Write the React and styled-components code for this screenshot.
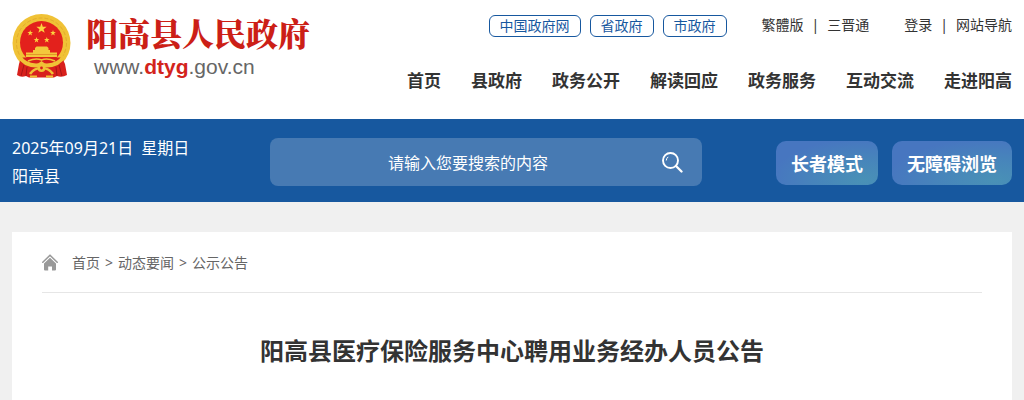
import React from 'react';
import styled, { createGlobalStyle } from 'styled-components';

const GlobalStyle = createGlobalStyle`
  * {
    box-sizing: border-box;
  }
  body {
    margin: 0;
    background: #f0f0f0;
    color: #333;
    font-family: "Noto Sans", "Noto Sans CJK SC", sans-serif;
    font-size: 14px;
  }
  a {
    color: inherit;
    text-decoration: none;
  }
  button, input {
    font-family: inherit;
  }
`;

const govLinks = ['中国政府网', '省政府', '市政府'];
const userLinks = [
  ['繁體版', '三晋通'],
  ['登录', '网站导航'],
];
const navItems = ['首页', '县政府', '政务公开', '解读回应', '政务服务', '互动交流', '走进阳高'];
const crumbs = ['首页', '动态要闻', '公示公告'];

const STAR = 'M0 -1 L0.24 -0.32 L0.95 -0.31 L0.38 0.12 L0.59 0.81 L0 0.4 L-0.59 0.81 L-0.38 0.12 L-0.95 -0.31 L-0.24 -0.32 Z';

const Emblem = () => (
  <svg width="60" height="64" viewBox="0 0 60 64" aria-hidden="true">
    <circle cx="29.5" cy="29" r="29" fill="#f0c236" />
    <circle cx="29.5" cy="29" r="25" fill="none" stroke="#e3ac2c" strokeWidth="1" strokeDasharray="4 2" />
    <circle cx="29.5" cy="28.5" r="21.5" fill="#e3211c" />
    <g fill="#fbd33f">
      <path d={STAR} transform="translate(29.5 14.5) scale(5.4)" />
      <path d={STAR} transform="translate(18.2 19) scale(3)" />
      <path d={STAR} transform="translate(41 19) scale(3)" />
      <path d={STAR} transform="translate(24.5 26) scale(3)" />
      <path d={STAR} transform="translate(34.8 26) scale(3)" />
    </g>
    <path d="M23 34 L24.5 32.5 H35 L36.5 34 V36 H38 V38.5 H45 V43 H14 V38.5 H21 V36 H23 Z" fill="#f3c83c" />
    <path d="M14 40.5 H45" stroke="#e08a24" strokeWidth="0.8" />
    <path d="M9 43.5 H50 L53 50 L55 61 Q50 64 45 62 L42 63.5 H17 L14 62 Q9 64 5 61 L7 50 Z" fill="#d8201c" />
    <path d="M7 42 Q12 51 24 51.5 Q27 51.5 29.5 49.5 Q32 51.5 35 51.5 Q47 51 52 42" fill="none" stroke="#f0c236" strokeWidth="4" />
    <path d="M16 47 Q24 43.5 29.5 46 Q35 43.5 43 47" fill="none" stroke="#f0c236" strokeWidth="1.6" />
    <path d="M18 60 Q22 54 29.5 54 Q37 54 41 60" fill="none" stroke="#f0c236" strokeWidth="2.6" />
    <circle cx="29.5" cy="54" r="4" fill="#f0c236" />
    <circle cx="29.5" cy="54" r="1.4" fill="#d8201c" />
    <path d="M18 62.5 H25 M34 62.5 H41" stroke="#f0c236" strokeWidth="2" />
    <path d="M12 51 L9 62 M15 53 L14 62 M47 51 L50 62 M44 53 L45 62" stroke="#a01416" strokeWidth="0.9" />
  </svg>
);

const SearchIcon = () => (
  <svg width="22" height="22" viewBox="0 0 22 22" fill="none" stroke="#fff" strokeLinecap="round" aria-hidden="true">
    <circle cx="9.5" cy="9.5" r="7.5" strokeWidth="1.9" />
    <path d="M15 15 L20.5 20.5" strokeWidth="2.3" />
    <path d="M5.3 9.1 Q5.5 7.1 6.9 6.1" strokeWidth="1" />
  </svg>
);

const HomeIcon = () => (
  <svg width="16" height="17" viewBox="0 0 16 17" aria-hidden="true">
    <path d="M0.8 8.2 L8 1.2 L15.2 8.2" fill="none" stroke="#999" strokeWidth="1.6" strokeLinecap="round" strokeLinejoin="round" />
    <path d="M8 3.8 L14 9.6 V15.5 Q14 16.4 13 16.4 H10 V12.6 H6.2 V16.4 H3 Q2 16.4 2 15.5 V9.6 Z" fill="#999" />
  </svg>
);

const App = () => {
  return (
    <Page>
      <GlobalStyle />
      <Header>
        <HeaderInner>
          <Logo href="#">
            <Emblem />
            <LogoText>
              <SiteName>阳高县人民政府</SiteName>
              <SiteUrl>www.<b>dtyg</b>.gov.cn</SiteUrl>
            </LogoText>
          </Logo>
          <HeaderRight>
            <TopLinks>
              <PillGroup>
                {govLinks.map((name) => <Pill href="#" key={name}>{name}</Pill>)}
              </PillGroup>
              {userLinks.map(([first, second]) => (
                <LinkPair key={first}>
                  <a href="#">{first}</a>
                  <span>|</span>
                  <a href="#">{second}</a>
                </LinkPair>
              ))}
            </TopLinks>
            <Nav>
              {navItems.map((item) => <a href="#" key={item}>{item}</a>)}
            </Nav>
          </HeaderRight>
        </HeaderInner>
      </Header>
      <BlueBar>
        <BarInner>
          <DateInfo>
            <DateLine>
              <span>2025年09月21日</span>
              <span>星期日</span>
            </DateLine>
            <div>阳高县</div>
          </DateInfo>
          <SearchForm onSubmit={(e) => e.preventDefault()}>
            <SearchInput type="text" placeholder="请输入您要搜索的内容" aria-label="请输入您要搜索的内容" />
            <SearchButton type="submit"><SearchIcon /></SearchButton>
          </SearchForm>
          <ModeButtons>
            <ModeButton type="button">长者模式</ModeButton>
            <ModeButton type="button">无障碍浏览</ModeButton>
          </ModeButtons>
        </BarInner>
      </BlueBar>
      <Main>
        <Article>
          <Breadcrumb>
            <HomeIcon />
            <CrumbList>
              {crumbs.map((crumb, index) => (
                <React.Fragment key={crumb}>
                  {index > 0 && <span>&gt;</span>}
                  <a href="#">{crumb}</a>
                </React.Fragment>
              ))}
            </CrumbList>
          </Breadcrumb>
          <Title>阳高县医疗保险服务中心聘用业务经办人员公告</Title>
        </Article>
      </Main>
    </Page>
  );
};

const Page = styled.div`
  display: flex;
  flex-direction: column;
  min-height: 100vh;
`;

const Container = styled.div`
  width: 100%;
  max-width: 1224px;
  margin: 0 auto;
  padding: 0 12px;
`;

const Header = styled.header`
  background: #fff;
`;

const HeaderInner = styled(Container)`
  display: flex;
  justify-content: space-between;
  align-items: flex-start;
  padding-top: 14px;
  padding-bottom: 26px;
`;

const Logo = styled.a`
  display: flex;
  gap: 14px;
`;

const LogoText = styled.div`
  display: flex;
  flex-direction: column;
`;

const SiteName = styled.strong`
  font-family: "Noto Serif CJK SC", "Noto Sans CJK SC", serif;
  font-size: 32px;
  font-weight: 900;
  line-height: 36px;
  color: #cc1f17;
`;

const SiteUrl = styled.span`
  padding-left: 8px;
  font-family: "Liberation Sans", sans-serif;
  font-size: 21px;
  line-height: 34px;
  color: #666;

  b {
    color: #d3241c;
  }
`;

const HeaderRight = styled.div`
  display: flex;
  flex-direction: column;
  align-items: flex-end;
  gap: 31px;
`;

const TopLinks = styled.div`
  display: flex;
  align-items: center;
  gap: 35px;
  height: 24px;
`;

const PillGroup = styled.div`
  display: flex;
  gap: 9px;
`;

const Pill = styled.a`
  padding: 0 10px 1px;
  border: 1px solid #17589f;
  border-radius: 6px;
  line-height: 19px;
  color: #17589f;
`;

const LinkPair = styled.div`
  display: flex;
  gap: 8px;
  padding-bottom: 2px;
  line-height: 22px;
`;

const Nav = styled.nav`
  display: flex;
  gap: 30px;
  font-size: 17px;
  font-weight: bold;
  line-height: 24px;
`;

const BlueBar = styled.div`
  background: #17589f;
  color: #fff;
`;

const BarInner = styled(Container)`
  display: grid;
  grid-template-columns: 258px minmax(0, 432px) 1fr;
  align-items: center;
  padding-top: 15px;
  padding-bottom: 12px;
`;

const DateInfo = styled.div`
  font-size: 16px;
  line-height: 28px;
`;

const DateLine = styled.div`
  display: flex;
  gap: 8px;
`;

const SearchForm = styled.form`
  display: flex;
  height: 48px;
  border-radius: 8px;
  background: #477ab3;
`;

const SearchInput = styled.input`
  flex: 1;
  min-width: 0;
  padding: 2px 0 0 24px;
  border: none;
  outline: none;
  background: none;
  color: #fff;
  font-size: 16px;
  text-align: center;

  &::placeholder {
    color: #fff;
    opacity: 1;
  }
`;

const SearchButton = styled.button`
  display: flex;
  align-items: center;
  justify-content: center;
  width: 60px;
  padding: 0;
  border: none;
  background: none;
  cursor: pointer;
`;

const ModeButtons = styled.div`
  display: flex;
  justify-content: flex-end;
  gap: 14px;
  padding-top: 2px;
`;

const ModeButton = styled.button`
  height: 44px;
  padding: 0 15px;
  border: none;
  border-radius: 10px;
  background: radial-gradient(ellipse at 85% 90%, #4991b6 0%, #4784bb 40%, #4776c0 75%);
  color: #fff;
  font-size: 18px;
  font-weight: bold;
  white-space: nowrap;
  cursor: pointer;
`;

const Main = styled(Container)`
  display: flex;
  flex: 1;
  padding-top: 30px;
`;

const Article = styled.main`
  flex: 1;
  padding: 0 30px;
  background: #fff;
`;

const Breadcrumb = styled.div`
  display: flex;
  align-items: center;
  gap: 14px;
  height: 61px;
  border-bottom: 1px solid #e6e6e6;
  color: #666;
`;

const CrumbList = styled.div`
  display: flex;
  gap: 5px;
  padding-top: 2px;
  line-height: 24px;
`;

const Title = styled.h1`
  margin: 40px 0 30px;
  font-size: 24px;
  font-weight: bold;
  line-height: 36px;
  text-align: center;
`;

export default App;
